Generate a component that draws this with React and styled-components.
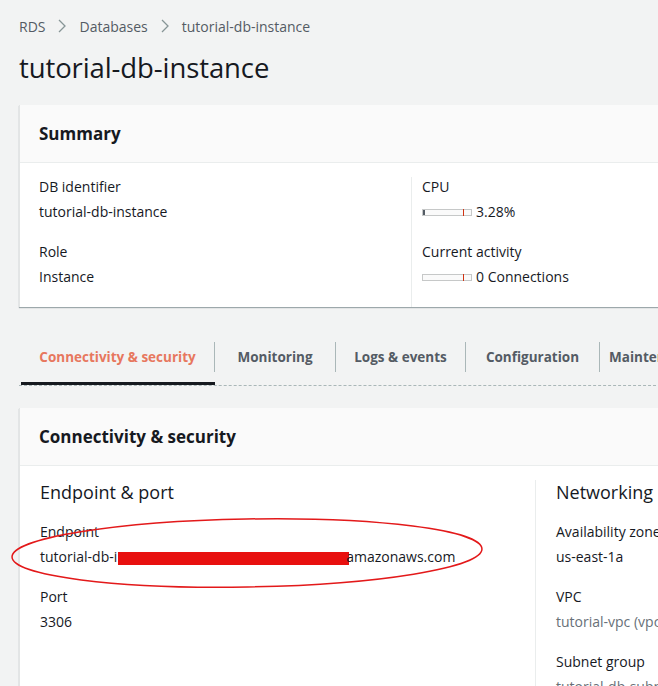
import React from "react";
import styled, { createGlobalStyle } from "styled-components";

const GlobalStyle = createGlobalStyle`
	html, body {
		margin: 0;
		padding: 0;
		background: #f2f3f3;
		overflow: hidden;
	}
	body {
		font-family: "Open Sans", "Noto Sans", sans-serif;
		color: #16191f;
	}
`;

const Page = styled.div`
	width: 658px;
	height: 686px;
	overflow: hidden;
	position: relative;
	padding: 17px 0 0 19px;
	box-sizing: border-box;
`;

const Crumbs = styled.nav`
	display: flex;
	align-items: center;
	gap: 11px;
	font-size: 14px;
	color: #545b64;
	height: 18px;
`;

const Chevron = styled.svg`
	width: 12px;
	height: 14px;
`;

const Heading = styled.h1`
	margin: 16px 0 0;
	font-size: 27.5px;
	font-weight: 400;
	line-height: 34px;
	letter-spacing: -0.1px;
`;

const Card = styled.section`
	margin-top: ${props => props.top}px;
	width: 660px;
	background: #fff;
	border-left: 1px solid #e3e5e5;
	box-shadow: 0 1px 1px 0 rgba(0, 28, 36, 0.35);
`;

const CardHeader = styled.header`
	height: 57px;
	display: flex;
	align-items: center;
	padding-left: 19px;
	background: #fafafa;
	border-bottom: 1px solid #eaeded;
	font-size: 17px;
	font-weight: 700;
`;

const Columns = styled.div`
	display: grid;
	grid-template-columns: ${props => props.cols};
	padding: ${props => props.pad};
`;

const Column = styled.div`
	display: flex;
	flex-direction: column;
	padding-left: ${props => props.left || 0}px;
	border-left: ${props => (props.divider ? "1px solid #eaeded" : "none")};
	min-height: ${props => props.minH || 0}px;
`;

const SubTitle = styled.h2`
	margin: 0 0 18px;
	font-size: 18px;
	font-weight: 400;
	line-height: 24px;
	white-space: nowrap;
`;

const Field = styled.div`
	display: flex;
	flex-direction: column;
	gap: 5px;
	margin-bottom: 20px;
	font-size: 14px;
	line-height: 20px;
	white-space: nowrap;
`;

const Value = styled.div`
	color: ${props => (props.muted ? "#687078" : "#16191f")};
	display: flex;
	align-items: center;
	gap: 4px;
`;

const Meter = styled.span`
	position: relative;
	display: inline-block;
	width: 48px;
	height: 5px;
	border: 1px solid #c6c8c8;
	background: #fafafa;
`;

const MeterFill = styled.span`
	position: absolute;
	left: 0;
	top: 0;
	bottom: 0;
	background: #545b64;
`;

const MeterMark = styled.span`
	position: absolute;
	left: 40px;
	top: -1px;
	bottom: -1px;
	width: 1px;
	background: #d13212;
`;

const Endpoint = styled.div`
	display: block;
`;

const Redacted = styled.span`
	display: inline-block;
	width: 231px;
	height: 13px;
	background: #e8100f;
	vertical-align: middle;
	margin: 0 -3px 0 1px;
`;

const Tabs = styled.div`
	margin-top: 35px;
	width: 660px;
	height: 43px;
	display: flex;
	align-items: flex-start;
	border-bottom: 1px dashed #aab7b8;
	padding-left: 2px;
`;

const Tab = styled.div`
	position: relative;
	flex: none;
	width: ${props => props.w}px;
	height: 30px;
	display: flex;
	align-items: center;
	justify-content: center;
	font-size: 13.5px;
	font-weight: 700;
	white-space: nowrap;
	color: ${props => (props.active ? "#e7775e" : "#545b64")};
	border-right: ${props => (props.last ? "none" : "1px solid #aab7b8")};

	&::after {
		content: "";
		display: ${props => (props.active ? "block" : "none")};
		position: absolute;
		left: 0;
		right: -1px;
		bottom: -13px;
		height: 3px;
		background: #16191f;
	}
`;

const Annotation = styled.svg`
	position: absolute;
	left: 0;
	top: 0;
	pointer-events: none;
`;

const Chev = () => (
	<Chevron viewBox="0 0 12 14">
		<path d="M3 1l6 6-6 6" fill="none" stroke="#879596" strokeWidth="1.3" />
	</Chevron>
);

export default function App() {
	return (
		<Page>
			<GlobalStyle />
			<Crumbs>
				<span>RDS</span>
				<Chev />
				<span>Databases</span>
				<Chev />
				<span>tutorial-db-instance</span>
			</Crumbs>
			<Heading>tutorial-db-instance</Heading>

			<Card top={20}>
				<CardHeader>Summary</CardHeader>
				<Columns cols="372px 1fr" pad="14px 0 0 19px">
					<Column>
						<Field>
							<span>DB identifier</span>
							<Value>tutorial-db-instance</Value>
						</Field>
						<Field>
							<span>Role</span>
							<Value>Instance</Value>
						</Field>
					</Column>
					<Column divider left={10}>
						<Field>
							<span>CPU</span>
							<Value>
								<Meter>
									<MeterFill style={{ width: "2px" }} />
									<MeterMark />
								</Meter>
								3.28%
							</Value>
						</Field>
						<Field>
							<span>Current activity</span>
							<Value>
								<Meter>
									<MeterMark />
								</Meter>
								0 Connections
							</Value>
						</Field>
					</Column>
				</Columns>
			</Card>

			<Tabs>
				<Tab active w={193}>Connectivity &amp; security</Tab>
				<Tab w={120}>Monitoring</Tab>
				<Tab w={129}>Logs &amp; events</Tab>
				<Tab w={133}>Configuration</Tab>
				<Tab last w={180}>Maintenance &amp; backups</Tab>
			</Tabs>

			<Card top={22}>
				<CardHeader>Connectivity &amp; security</CardHeader>
				<Columns cols="495px 1fr" pad="14px 0 0 20px">
					<Column minH={230}>
						<SubTitle>Endpoint &amp; port</SubTitle>
						<Field>
							<span>Endpoint</span>
							<Endpoint>
								tutorial-db-i<Redacted />amazonaws.com
							</Endpoint>
						</Field>
						<Field>
							<span>Port</span>
							<Value>3306</Value>
						</Field>
					</Column>
					<Column divider left={20}>
						<SubTitle>Networking</SubTitle>
						<Field>
							<span>Availability zone</span>
							<Value>us-east-1a</Value>
						</Field>
						<Field>
							<span>VPC</span>
							<Value muted>tutorial-vpc (vpc-0a1b2c3d4e5f)</Value>
						</Field>
						<Field>
							<span>Subnet group</span>
							<Value muted>tutorial-db-subnet-group</Value>
						</Field>
					</Column>
				</Columns>
			</Card>

			<Annotation width="658" height="686" viewBox="0 0 658 686">
				<ellipse
					cx="247"
					cy="553"
					rx="235"
					ry="34"
					transform="rotate(-1 247 553)"
					fill="none"
					stroke="#e3191a"
					strokeWidth="1.5"
				/>
			</Annotation>
		</Page>
	);
}
